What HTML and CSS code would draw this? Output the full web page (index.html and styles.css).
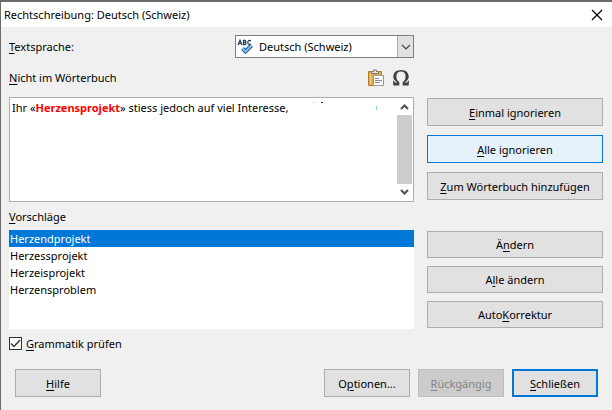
FILE: index.html
```html
<!DOCTYPE html>
<html lang="de-CH">
<head>
  <meta charset="UTF-8">
  <title>Rechtschreibung: Deutsch (Schweiz)</title>
  <link rel="stylesheet" href="styles.css">
</head>
<body>
  <div class="dialog">
    <header class="titlebar">
      <h1>Rechtschreibung: Deutsch (Schweiz)</h1>
      <button type="button" class="close" aria-label="Fenster schliessen">
        <svg width="12" height="12" viewBox="0 0 12 12"><path d="M1 1L11 11M11 1L1 11" stroke="#000" stroke-width="1.2" fill="none"/></svg>
      </button>
    </header>

    <form class="content">
      <!-- Textsprache -->
      <div class="main language">
        <label for="language"><u>T</u>extsprache:</label>
        <div class="combo">
          <svg class="abc" width="18" height="16" viewBox="0 0 18 16">
            <g fill="none" stroke="#1b3a55" stroke-width="1.2">
              <path d="M1 6L3 1.2L5 6M1.8 4.5H4.2"/>
              <path d="M6.5 1V6M6 1.4H8.2Q9.4 2.4 8.2 3.4H6.5M8.2 3.4Q10 4.5 8.2 5.6H6"/>
              <path d="M14 1.9Q10.8 .3 10.8 3.5Q11 6.4 14 5"/>
            </g>
            <path d="M5.5 9.5L8.5 12.5L14.5 6.5" fill="none" stroke="#1f5c94" stroke-width="4"/>
            <path d="M5.5 9.5L8.5 12.5L14.5 6.5" fill="none" stroke="#83beec" stroke-width="2"/>
          </svg>
          <select id="language">
            <option>Deutsch (Schweiz)</option>
          </select>
          <span class="arrow">
            <svg width="10" height="6" viewBox="0 0 10 6"><path d="M1 1L5 5L9 1" fill="none" stroke="#444" stroke-width="1.2"/></svg>
          </span>
        </div>
      </div>

      <!-- Nicht im Wörterbuch -->
      <div class="main heading">
        <span id="notInDict"><u>N</u>icht im Wörterbuch</span>
        <div class="tools">
          <button type="button" aria-label="Einfügen">
            <svg width="18" height="18" viewBox="0 0 18 18">
              <path d="M1.5 2.5H14.5V16.5H1.5Z" fill="#e9a944" stroke="#b97b22"/>
              <path d="M3.5 4V15" stroke="#f6cf8a"/>
              <path d="M4.5 4.5V2.5H6.5V1H9.5V2.5H11.5V4.5Z" fill="#e4e4e4" stroke="#777"/>
              <path d="M6.5 6.5H16.5V16.5H6.5Z" fill="#fff" stroke="#999"/>
              <path d="M8 9.5H12M8 11.5H15M8 13.5H13" stroke="#8a8a8a"/>
            </svg>
          </button>
          <button type="button" aria-label="Sonderzeichen">
            <svg width="18" height="18" viewBox="0 0 18 18">
              <path d="M9 1C4.300 1 1.300 3.800 1.300 7.600C1.300 10.300 2.900 12.300 5.500 13.500H3.300C2.400 13.500 2.200 13 1.900 11.800H1L1.300 16.500H7.300V13C5.300 11.800 4.400 10 4.400 7.400C4.400 4.200 6 2.500 9 2.500C12 2.500 13.600 4.200 13.600 7.400C13.600 10 12.700 11.800 10.700 13V16.500H16.700L17 11.800H16.100C15.800 13 15.600 13.500 14.700 13.500H12.500C15.100 12.300 16.700 10.300 16.700 7.600C16.700 3.800 13.700 1 9 1Z" fill="#3a4247"/>
            </svg>
          </button>
        </div>
      </div>

      <div class="editor">
        <div class="text" contenteditable="true" spellcheck="false" role="textbox" aria-multiline="true" aria-labelledby="notInDict">Ihr «<strong>Herzensprojekt</strong>» stiess jedoch auf viel Interesse,<svg class="specks" width="66" height="12" viewBox="0 0 66 12" aria-hidden="true"><path d="M1 3.5H2" stroke="#8fd3ea"/><path d="M9 3.5H11" stroke="#222"/><path d="M64.500 7V11" stroke="#8fd8e6"/></svg></div>
        <div class="scrollbar">
          <svg width="15" height="17" viewBox="0 0 15 17"><path d="M4 11L7.500 7.500L11 11" fill="none" stroke="#505050" stroke-width="2"/></svg>
          <span class="thumb"></span>
          <svg width="15" height="17" viewBox="0 0 15 17"><path d="M4 6L7.500 9.500L11 6" fill="none" stroke="#505050" stroke-width="2"/></svg>
        </div>
      </div>
      <div class="actions ignore">
        <button type="button" class="btn"><span><u>E</u>inmal ignorieren</span></button>
        <button type="button" class="btn hot"><span><u>A</u>lle ignorieren</span></button>
        <button type="button" class="btn"><span><u>Z</u>um Wörterbuch hinzufügen</span></button>
      </div>

      <!-- Vorschläge -->
      <div class="main suggest" id="suggestLabel"><u>V</u>orschläge</div>
      <ul class="list" role="listbox" tabindex="0" aria-labelledby="suggestLabel">
        <li role="option" aria-selected="true">Herzendprojekt</li>
        <li role="option" aria-selected="false">Herzessprojekt</li>
        <li role="option" aria-selected="false">Herzeisprojekt</li>
        <li role="option" aria-selected="false">Herzensproblem</li>
      </ul>
      <div class="actions change">
        <button type="button" class="btn"><span>Ä<u>n</u>dern</span></button>
        <button type="button" class="btn"><span>A<u>l</u>le ändern</span></button>
        <button type="button" class="btn"><span>Auto<u>K</u>orrektur</span></button>
      </div>

      <div class="main grammar">
        <input type="checkbox" id="grammar" checked>
        <label for="grammar"><u>G</u>rammatik prüfen</label>
      </div>
    </form>

    <footer class="footer">
      <button type="button" class="btn help"><span><u>H</u>ilfe</span></button>
      <button type="button" class="btn"><span>O<u>p</u>tionen...</span></button>
      <button type="button" class="btn" disabled><span><u>R</u>ückgängig</span></button>
      <button type="button" class="btn default"><span><u>S</u>chließen</span></button>
    </footer>
  </div>
</body>
</html>
```
FILE: styles.css
```css
* {
  margin: 0;
  padding: 0;
  box-sizing: border-box;
}
body {
  font: 11px/17px "Noto Sans", "Open Sans", sans-serif;
  color: #000;
  background: #f0f0f0;
}
button, select {
  font: inherit;
  color: inherit;
}
svg {
  display: block;
}
u {
  text-underline-offset: 2px;
}
.dialog {
  min-height: 100vh;
  border-top: 2px solid #6b6b6b;
  border-left: 1px solid #6b6b6b;
}

/* Titelleiste */
.titlebar {
  display: flex;
  justify-content: space-between;
  align-items: center;
  height: 25px;
  padding: 0 9px 0 3px;
  background: #fff;
}
.titlebar h1 {
  font-size: 11px;
  font-weight: normal;
}
.close {
  border: 0;
  background: none;
}

/* Inhalt */
.content {
  display: grid;
  grid-template-columns: 1fr 176px;
  column-gap: 13px;
  padding: 8px 9px 0 8px;
}
.main {
  grid-column: 1;
}
.language, .heading {
  display: flex;
  justify-content: space-between;
  align-items: center;
}
.combo {
  display: flex;
  align-items: center;
  width: 179px;
  height: 23px;
  border: 1px solid #7a7f87;
  background: #fff;
}
.abc {
  margin-left: 1px;
}
.combo select {
  flex: 1;
  appearance: none;
  border: 0;
  background: none;
  padding-left: 4px;
  outline: 0;
}
.arrow {
  display: flex;
  align-items: center;
  justify-content: center;
  width: 16px;
  height: 100%;
  border-left: 1px solid #adadad;
  background: #e1e1e1;
}
.heading {
  height: 39px;
}
.tools {
  display: flex;
  gap: 7px;
  padding-right: 4px;
}
.tools button {
  border: 0;
  background: none;
}
.editor {
  display: flex;
  grid-column: 1;
  height: 105px;
  border: 1px solid #abadb3;
  background: #fff;
}
.text {
  flex: 1;
  padding: 1px 2px;
  outline: 0;
}
.text strong {
  color: #f00;
}
.specks {
  display: inline-block;
  margin-left: 24px;
  vertical-align: top;
}
.scrollbar {
  display: flex;
  flex-direction: column;
  width: 16px;
}
.thumb {
  flex: 1;
  width: 15px;
  background: #cdcdcd;
}
.actions {
  display: flex;
  flex-direction: column;
}
.ignore {
  gap: 9px;
  padding-top: 1px;
}
.change {
  gap: 8px;
  padding-top: 1px;
}
.change .btn {
  height: 27px;
}
.btn {
  height: 28px;
  border: 1px solid #adadad;
  background: #e1e1e1;
}
.btn.hot {
  border-color: #0078d7;
  background: #e5f1fb;
}
.btn.default {
  border: 2px solid #0078d7;
}
.btn:disabled {
  border-color: #bfbfbf;
  background: #ccc;
  color: #838383;
}
.suggest {
  padding: 6px 0 5px;
}
.list {
  grid-column: 1;
  height: 99px;
  list-style: none;
  background: #fff;
  outline: 0;
}
.list li {
  padding-left: 1px;
}
.list li[aria-selected="true"] {
  background: #0078d7;
  color: #fff;
}
.grammar {
  display: flex;
  align-items: center;
  gap: 4px;
  padding-top: 6px;
}
.grammar input {
  appearance: none;
  width: 13px;
  height: 13px;
  border: 1px solid #333;
  background: #fff;
}
.grammar input:checked {
  background: #fff url("data:image/svg+xml,%3Csvg xmlns='http://www.w3.org/2000/svg' viewBox='0 0 11 11'%3E%3Cpath d='M1 5.500L4 8.500L10 2' fill='none' stroke='%23333' stroke-width='1.4'/%3E%3C/svg%3E");
}

/* Fusszeile */
.footer {
  display: flex;
  gap: 8px;
  padding: 17px 14px 13px;
}
.footer .btn {
  width: 86px;
}
.help {
  margin-right: auto;
}
```
